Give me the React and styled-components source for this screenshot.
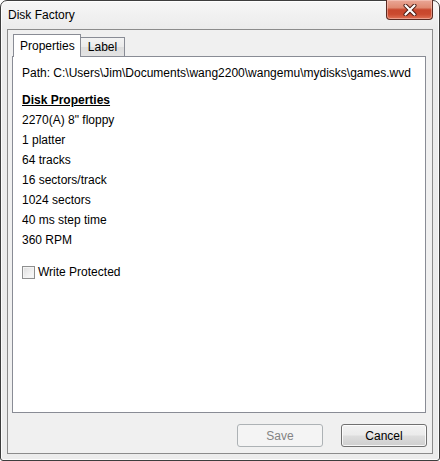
import styled, { createGlobalStyle } from 'styled-components';

const Global = createGlobalStyle`
  html, body { margin: 0; padding: 0; background: #fff; }
  body {
    font-family: "Liberation Sans", "Noto Sans", sans-serif;
    font-size: 12px;
    color: #000;
  }
`;

const Window = styled.div`
  width: 440px;
  height: 461px;
  box-sizing: border-box;
  border: 1px solid #3d3d3d;
  border-radius: 7px 7px 3px 3px;
  box-shadow: inset 0 0 0 1px rgba(255, 255, 255, 0.85);
  background: linear-gradient(180deg, #f6f6f6 0px, #ebebeb 28px, #ececec 100%);
  padding: 0 6px 6px 6px;
  display: flex;
  flex-direction: column;
`;

const TitleBar = styled.div`
  height: 28px;
  display: flex;
  justify-content: space-between;
  align-items: flex-start;
`;

const Title = styled.div`
  padding-left: 1px;
  line-height: 28px;
  font-size: 12px;
`;

const CloseButton = styled.div`
  width: 47px;
  height: 20px;
  margin-top: -1px;
  box-sizing: border-box;
  border: 1px solid #5a2a22;
  border-top: none;
  border-radius: 0 0 4px 4px;
  background: linear-gradient(180deg, #eaa797 0%, #e08a72 40%, #c8462c 52%, #cb4a2f 75%, #e07256 100%);
  box-shadow: inset 0 0 0 1px rgba(255, 220, 210, 0.45);
  display: flex;
  align-items: center;
  justify-content: center;
`;

const Client = styled.div`
  flex: 1;
  border: 1px solid #8b8b8b;
  background: #f0f0f0;
  padding: 4px 5px 0 4px;
  display: flex;
  flex-direction: column;
`;

const TabStrip = styled.div`
  display: flex;
  align-items: flex-end;
  height: 23px;
  padding-left: 1px;
  margin-bottom: -1px;
  position: relative;
  z-index: 1;
`;

const Tab = styled.div`
  box-sizing: border-box;
  border: 1px solid #898c95;
  border-bottom: ${p => (p.$active ? 'none' : '1px solid #898c95')};
  border-left: ${p => (p.$first ? '1px solid #898c95' : 'none')};
  height: ${p => (p.$active ? '23px' : '20px')};
  padding: ${p => (p.$active ? '0 6px' : '0 4px 0 4px')};
  line-height: ${p => (p.$active ? '22px' : '19px')};
  width: ${p => p.$w}px;
  text-align: center;
  background: ${p =>
    p.$active
      ? '#fff'
      : 'linear-gradient(180deg, #f3f3f3 0%, #ebebeb 48%, #dedede 52%, #e3e3e3 100%)'};
`;

const Panel = styled.div`
  height: 357px;
  box-sizing: border-box;
  border: 1px solid #898c95;
  background: #fff;
  padding: 6px 9px;
  margin-right: 1px;
`;

const Row = styled.div`
  height: 20px;
  line-height: 20px;
  white-space: nowrap;
  margin-top: ${p => p.$gap || 0}px;
`;

const Heading = styled(Row)`
  font-weight: bold;
  text-decoration: underline;
`;

const CheckRow = styled(Row)`
  display: flex;
  align-items: center;
  gap: 3px;
`;

const Box = styled.span`
  width: 13px;
  height: 13px;
  box-sizing: border-box;
  border: 1px solid #8e8f8f;
  background: linear-gradient(135deg, #dcdcdc 0%, #f2f2f2 60%, #fbfbfb 100%);
  box-shadow: inset 0 0 0 1px #f4f4f4;
`;

const Footer = styled.div`
  display: flex;
  justify-content: flex-end;
  gap: 18px;
  padding-top: 11px;
`;

const Button = styled.div`
  width: 86px;
  height: 23px;
  box-sizing: border-box;
  border-radius: 3px;
  display: flex;
  align-items: center;
  justify-content: center;
  border: 1px solid ${p => (p.$disabled ? '#adb2b5' : '#707070')};
  color: ${p => (p.$disabled ? '#838383' : '#000')};
  background: ${p =>
    p.$disabled
      ? '#f4f4f4'
      : 'linear-gradient(180deg, #f2f2f2 0%, #ebebeb 48%, #dddddd 52%, #cfcfcf 100%)'};
  box-shadow: ${p => (p.$disabled ? 'none' : 'inset 0 0 0 1px rgba(255,255,255,0.8)')};
`;

const rows = [
  '2270(A) 8" floppy',
  '1 platter',
  '64 tracks',
  '16 sectors/track',
  '1024 sectors',
  '40 ms step time',
  '360 RPM',
];

export default function App() {
  return (
    <>
      <Global />
      <Window>
        <TitleBar>
          <Title>Disk Factory</Title>
          <CloseButton>
            <svg width="14" height="12" viewBox="0 0 14 12">
              <path d="M2.5 1.5 L11.5 10.5 M11.5 1.5 L2.5 10.5" stroke="#4a1a12" strokeWidth="4" strokeLinecap="round" />
              <path d="M2.5 1.5 L11.5 10.5 M11.5 1.5 L2.5 10.5" stroke="#fff" strokeWidth="2.2" strokeLinecap="round" />
            </svg>
          </CloseButton>
        </TitleBar>
        <Client>
          <TabStrip>
            <Tab $active $first $w={68}>Properties</Tab>
            <Tab $w={44}>Label</Tab>
          </TabStrip>
          <Panel>
            <Row>Path: C:\Users\Jim\Documents\wang2200\wangemu\mydisks\games.wvd</Row>
            <Heading $gap={7}>Disk Properties</Heading>
            {rows.map(r => (
              <Row key={r}>{r}</Row>
            ))}
            <CheckRow $gap={12}>
              <Box />
              <span>Write Protected</span>
            </CheckRow>
          </Panel>
          <Footer>
            <Button $disabled>Save</Button>
            <Button>Cancel</Button>
          </Footer>
        </Client>
      </Window>
    </>
  );
}
